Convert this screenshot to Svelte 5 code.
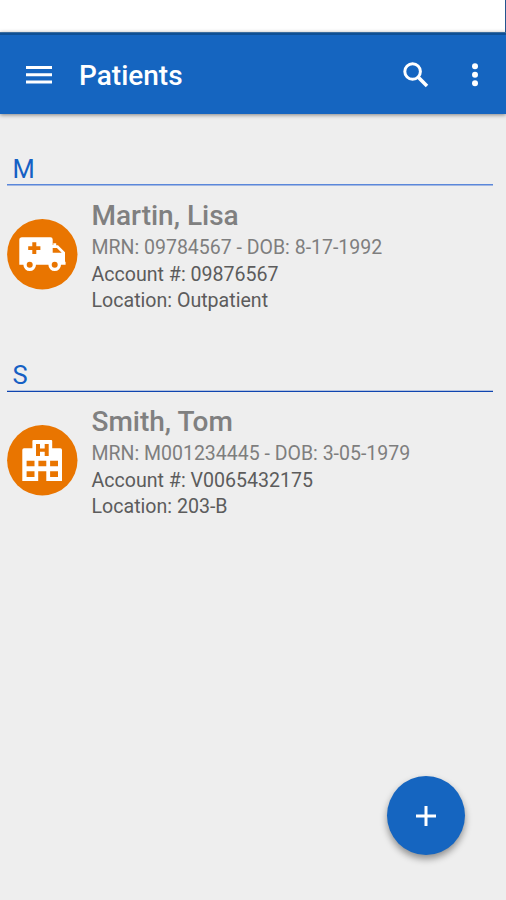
<script>
  const groups = [
    { letter: 'M', name: 'Martin, Lisa', mrn: '09784567', dob: '8-17-1992', account: '09876567', location: 'Outpatient', kind: 'ambulance' },
    { letter: 'S', name: 'Smith, Tom', mrn: 'M001234445', dob: '3-05-1979', account: 'V0065432175', location: '203-B', kind: 'hospital' }
  ];
</script>

<div class="screen">
  <div class="status"></div>
  <header>
    <svg class="menu" width="26" height="18" viewBox="0 0 26 18" fill="#fff">
      <path d="M0 0h26v3H0zM0 7.2h26v3H0zM0 14.4h26v3H0z" />
    </svg>
    <h1>Patients</h1>
    <svg class="search" width="26" height="26" viewBox="0 0 26 26" fill="none" stroke="#fff">
      <circle cx="9.6" cy="9.5" r="7.8" stroke-width="3" />
      <path d="M15.3 15.2L24 23.9" stroke-width="3.6" />
    </svg>
    <svg class="more" width="6" height="24" viewBox="0 0 6 24" fill="#fff">
      <circle cx="3" cy="3.3" r="3" /><circle cx="3" cy="11.8" r="3" /><circle cx="3" cy="20.2" r="3" />
    </svg>
  </header>
  <main>
    {#each groups as g}
      <section>
        <h2 class:dark={g.letter === 'S'}>{g.letter}</h2>
        <div class="row">
          <svg class="avatar" width="71" height="71" viewBox="0 0 71 71">
            <circle cx="35.3" cy="35.3" r="35.2" fill="#e97500" />
            {#if g.kind === 'ambulance'}
              <path fill="#fff" d="M15 18.2H43.5Q45.7 18.2 45.7 20.4V26H46.3V24.3H49.2V26.3H51L58 33.3V42.8H58.6V45.8H54A6.3 6.3 0 0 1 41.4 45.8H29A6.3 6.3 0 0 1 16.4 45.8H12.3V21Q12.3 18.2 15 18.2Z" />
              <path fill="#e97500" d="M25.3 23.2h4v4.1h4.1v3.7h-4.1v4.1h-4V31h-4.1v-3.7h4.1zM45.7 29H49.9L54.7 33.8H45.7z" />
              <circle cx="22.7" cy="45.7" r="3" fill="#e97500" />
              <circle cx="47.7" cy="45.7" r="3" fill="#e97500" />
            {:else}
              <path fill="#fff" d="M26.4 15.1H44.2Q45.2 15.1 45.2 16.1V23.3H53.3Q55 23.3 55 25V56H39.3V46.2H31.2V56H15.3V25Q15.3 23.3 17 23.3H25.4V16.1Q25.4 15.1 26.4 15.1Z" />
              <path fill="#e97500" d="M29 19.1h4v4.3h4.7v-4.3h4v11.8h-4v-4.2H33v4.2h-4zM19.6 35.7h7.9v5.6h-7.9zM31.4 35.7h7.9v5.6h-7.9zM43.1 35.7H51v5.6h-7.9zM19.6 46.2h7.9v5.7h-7.9zM43.1 46.2H51v5.7h-7.9z" />
            {/if}
          </svg>
          <div class="details">
            <h3>{g.name}</h3>
            <p class="light">MRN: {g.mrn} - DOB: {g.dob}</p>
            <p>Account #: {g.account}</p>
            <p>Location: {g.location}</p>
          </div>
        </div>
      </section>
    {/each}
  </main>
  <button aria-label="Add patient">
    <svg width="20" height="20" viewBox="0 0 20 20" fill="#fff"><path d="M8.5 0h3v8.5H20v3h-8.5V20h-3v-8.5H0v-3h8.5z" /></svg>
  </button>
</div>

<style>
  .screen {
    position: relative;
    box-sizing: border-box;
    width: 506px;
    height: 900px;
    overflow: hidden;
    background: #eee;
    font-family: Roboto, sans-serif;
  }
  h1, h2, h3, p { margin: 0; font-weight: 400; white-space: nowrap; }
  .status {
    height: 32px;
    box-sizing: border-box;
    background: #fff;
    border-right: 1px solid #24568f;
  }
  header {
    display: flex;
    align-items: center;
    box-sizing: border-box;
    height: 82px;
    padding: 2px 28px 0 26px;
    background: linear-gradient(#3b6d9f 0 1px, #0e4f94 1px 3px, #1565c0 3px);
    box-shadow: 0 1px 4px rgba(0, 0, 0, 0.45);
  }
  .menu { margin-top: 2px; }
  h1 {
    flex: 1;
    margin: 4px 0 0 27px;
    color: #fff;
    font-size: 28px;
    font-weight: 500;
    line-height: 34px;
  }
  .search { margin: 2px 43px 0 0; }
  .more { margin-top: 1px; }
  main { padding: 39px 13px 0 7px; }
  section { height: 206px; }
  h2 {
    height: 30px;
    padding: 1px 0 0 5.5px;
    border-bottom: 1px solid #5a87da;
    box-shadow: 0 1px 0 #a3b8e2;
    color: #1560c4;
    font-size: 25.5px;
    line-height: 30px;
  }
  h2.dark { border-color: #b4c2df; box-shadow: 0 1px 0 #0f45b0; }
  .row { display: flex; padding-top: 13px; }
  .avatar { flex: none; margin-top: 21px; }
  .details { margin-left: 13.5px; }
  h3 {
    color: #808080;
    font-size: 28px;
    font-weight: 500;
    line-height: 36px;
    margin-bottom: 1px;
  }
  p { color: #5c5c5c; font-size: 19.6px; line-height: 26.7px; }
  .light { color: #7e7e7e; font-size: 19.5px; }
  button {
    position: absolute;
    right: 41px;
    bottom: 45px;
    display: flex;
    align-items: center;
    justify-content: center;
    width: 78px;
    height: 79px;
    padding: 0;
    border: 0;
    border-radius: 50%;
    background: #1565c0;
    box-shadow: 0 4px 7px rgba(0, 0, 0, 0.4);
  }
</style>
